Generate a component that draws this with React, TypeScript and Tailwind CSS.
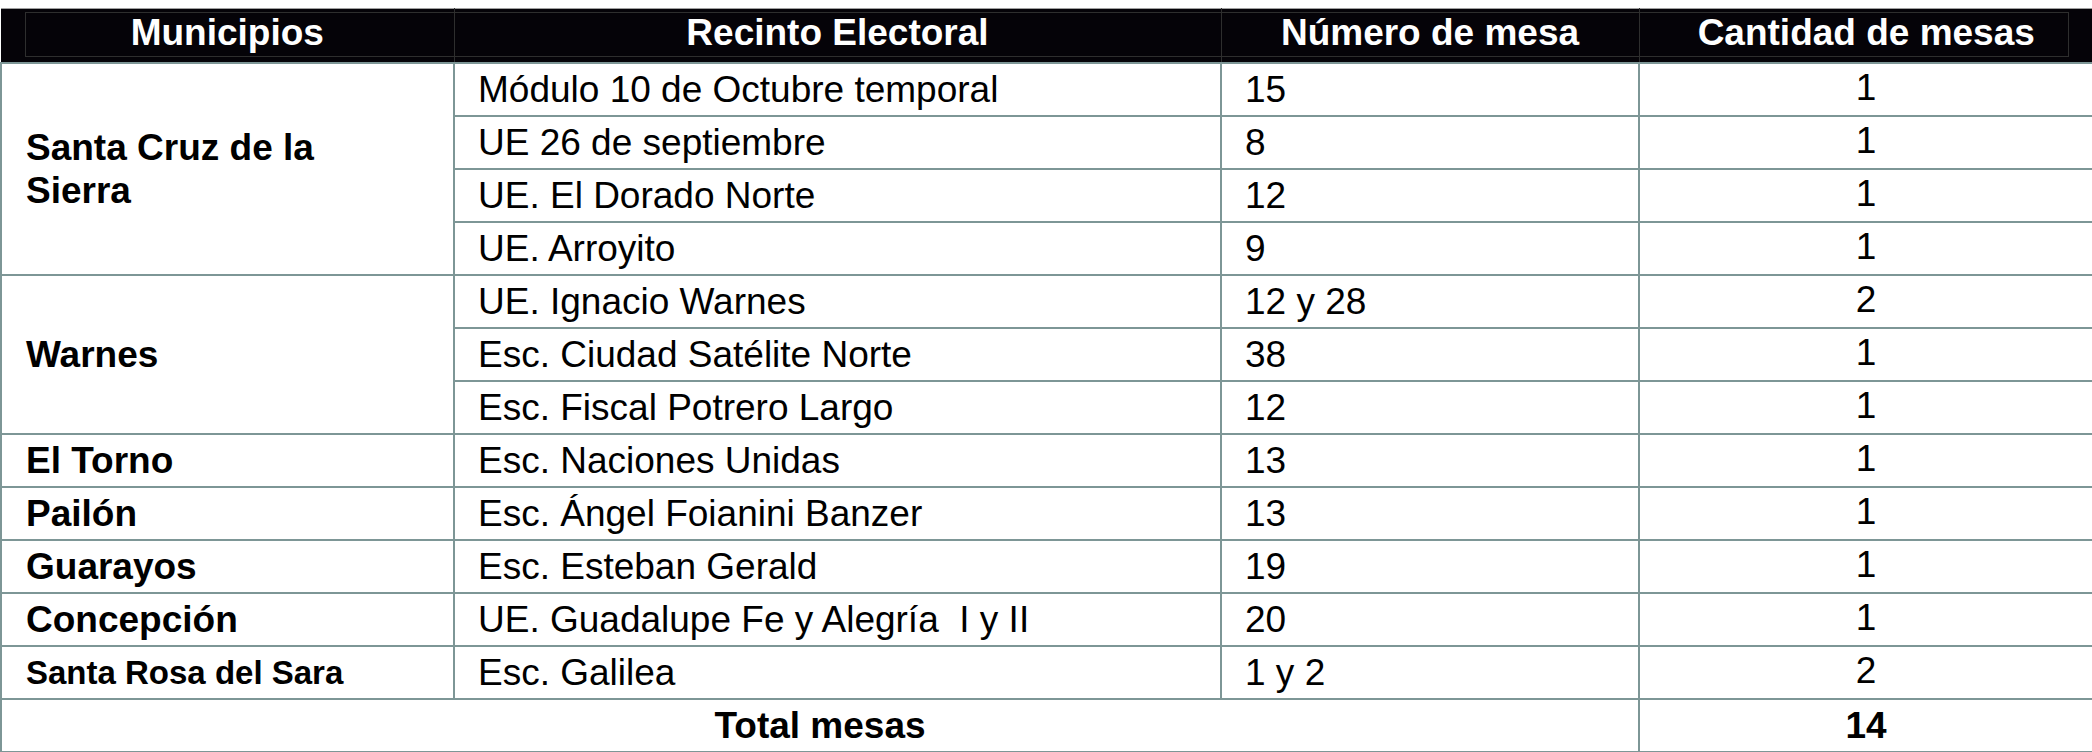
const rows = [
  { muni: 'Santa Cruz de la|Sierra', span: 4, recinto: 'Módulo 10 de Octubre temporal', num: '15', cant: '1' },
  { recinto: 'UE 26 de septiembre', num: '8', cant: '1' },
  { recinto: 'UE. El Dorado Norte', num: '12', cant: '1' },
  { recinto: 'UE. Arroyito', num: '9', cant: '1' },
  { muni: 'Warnes', span: 3, recinto: 'UE. Ignacio Warnes', num: '12 y 28', cant: '2' },
  { recinto: 'Esc. Ciudad Satélite Norte', num: '38', cant: '1' },
  { recinto: 'Esc. Fiscal Potrero Largo', num: '12', cant: '1' },
  { muni: 'El Torno', span: 1, recinto: 'Esc. Naciones Unidas', num: '13', cant: '1' },
  { muni: 'Pailón', span: 1, recinto: 'Esc. Ángel Foianini Banzer', num: '13', cant: '1' },
  { muni: 'Guarayos', span: 1, recinto: 'Esc. Esteban Gerald', num: '19', cant: '1' },
  { muni: 'Concepción', span: 1, recinto: 'UE. Guadalupe Fe y Alegría  I y II', num: '20', cant: '1' },
  { muni: 'Santa Rosa del Sara', span: 1, small: true, recinto: 'Esc. Galilea', num: '1 y 2', cant: '2' },
]

const cell = 'border-2 border-[#7d9696] h-[51px] p-0 align-middle'

export default function App() {
  return (
    <div
      className="w-[2092px] h-[752px] bg-white pt-[8px] text-black overflow-hidden"
      style={{ fontFamily: '"Liberation Sans", Arial, sans-serif' }}
    >
      <table className="w-[2092px] table-fixed border-collapse text-[37px]">
        <colgroup>
          <col className="w-[453px]" />
          <col className="w-[767px]" />
          <col className="w-[418px]" />
          <col className="w-[454px]" />
        </colgroup>
        <thead>
          <tr className="bg-[#050308] text-white font-bold border-t border-[#a0a0a0]">
            {['Municipios', 'Recinto Electoral', 'Número de mesa', 'Cantidad de mesas'].map((h, i) => (
              <th
                key={h}
                className={`relative h-[53px] p-0 leading-[47px] pb-[6px] text-center font-bold ${i > 0 ? 'border-l border-[#2e2e2e]' : ''}`}
              >
                {i === 0 && (
                  <span className="absolute left-[24px] top-[3px] bottom-[5px] right-0 border-l border-t border-b border-[#2e2e2e]" />
                )}
                {i === 3 && (
                  <span className="absolute left-0 top-[3px] bottom-[5px] right-[24px] border-r border-t border-b border-[#2e2e2e]" />
                )}
                {(i === 1 || i === 2) && (
                  <span className="absolute left-0 right-0 top-[3px] bottom-[5px] border-t border-b border-[#2e2e2e]" />
                )}
                <span className="relative">{h}</span>
              </th>
            ))}
          </tr>
        </thead>
        <tbody>
          {rows.map((r, i) => (
            <tr key={i}>
              {r.muni && (
                <td
                  rowSpan={r.span}
                  className={`${cell} pl-[24px] font-bold ${r.small ? 'text-[33px]' : ''} ${r.span && r.span > 1 ? 'leading-[43px]' : 'leading-[51px]'}`}
                >
                  {r.muni.split('|').map((line, j) => (
                    <div key={j}>{line}</div>
                  ))}
                </td>
              )}
              <td className={`${cell} leading-[51px] pl-[23px] whitespace-pre`}>{r.recinto}</td>
              <td className={`${cell} leading-[51px] pl-[23px]`}>{r.num}</td>
              <td className={`${cell} text-center`}>
                <div className="leading-[47px] pb-[4px]">{r.cant}</div>
              </td>
            </tr>
          ))}
          <tr>
            <td colSpan={3} className={`${cell} leading-[51px] text-center font-bold`}>Total mesas</td>
            <td className={`${cell} leading-[51px] text-center font-bold`}>14</td>
          </tr>
        </tbody>
      </table>
    </div>
  )
}
